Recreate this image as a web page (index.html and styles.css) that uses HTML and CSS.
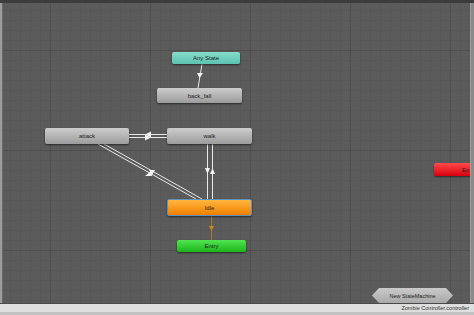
FILE: index.html
```html
<!DOCTYPE html>
<html lang="en">
<head>
    <meta charset="UTF-8">
    <title>Animator</title>
    <link rel="stylesheet" href="styles.css">
</head>
<body>
    <div class="window">
        <div class="topbar"></div>
        <div class="middle">
            <div class="edge-left"></div>
            <div class="canvas">
                <!-- transitions -->
                <svg class="links" viewBox="3 3 467 300" width="467" height="300">
                    <g stroke="#e8e8e8" stroke-width="1" fill="none">
                        <line x1="202" y1="64" x2="198" y2="88"/>
                        <line x1="129" y1="134.5" x2="167" y2="134.5"/>
                        <line x1="129" y1="137.5" x2="167" y2="137.5"/>
                        <line x1="207.5" y1="144" x2="207.5" y2="199"/>
                        <line x1="212.5" y1="144" x2="212.5" y2="199"/>
                        <line x1="98" y1="144" x2="196" y2="199"/>
                        <line x1="104" y1="144" x2="202" y2="199"/>
                    </g>
                    <line x1="211.5" y1="216" x2="211.5" y2="240" stroke="#b07a20" stroke-width="1"/>
                    <g fill="#f2f2f2">
                        <polygon points="197,73 203,73 199.5,78"/>
                        <polygon points="145,134.5 151,131.5 151,137.5"/>
                        <polygon points="151,137.5 145,134.5 145,140.5"/>
                        <polygon points="205,168 210,168 207.5,174"/>
                        <polygon points="210,174 215,174 212.5,168"/>
                        <polygon points="145,176 151,171 152,176"/>
                        <polygon points="155,170 149,170 152,175"/>
                    </g>
                    <polygon points="209,226 214,226 211.5,231" fill="#c88a20"/>
                </svg>

                <div class="node teal" style="left:169px; top:49px; width:68px; height:12px;">Any State</div>
                <div class="node gray" style="left:154px; top:85px; width:85px; height:15px;">back_fall</div>
                <div class="node gray" style="left:42px; top:125px; width:84px; height:16px;">attack</div>
                <div class="node gray" style="left:164px; top:125px; width:85px; height:16px;">walk</div>
                <div class="node orange" style="left:164px; top:196px; width:85px; height:17px;">Idle</div>
                <div class="node green" style="left:174px; top:237px; width:69px; height:12px;">Entry</div>
                <div class="node red" style="left:431px; top:160px; width:50px; height:13px;"><span class="red-label">Ex</span></div>

                <div class="machine">New StateMachine</div>
            </div>
            <div class="edge-right"></div>
        </div>
        <div class="statusbar">Zombie Controller.controller</div>
        <div class="footer"></div>
    </div>
</body>
</html>
```

FILE: styles.css
```css
body {
    margin: 0;
    overflow: hidden;
    font-family: "Liberation Sans", Arial, sans-serif;
    background: #c4c4c4;
}
.window {
    width: 474px;
    height: 315px;
    display: flex;
    flex-direction: column;
}
.topbar {
    height: 3px;
    background: #3c3c3c;
}
.middle {
    display: flex;
    height: 300px;
}
.edge-left {
    width: 3px;
    background: #9c9c9c;
    border-right: 1px solid #6a6a6a;
    box-sizing: border-box;
}
.edge-right {
    width: 4px;
    background: #8a8a8a;
    border-left: 1px solid #9e9e9e;
    box-sizing: border-box;
}
.canvas {
    position: relative;
    width: 467px;
    overflow: hidden;
    background-color: #5b5b5b;
    background-image:
        linear-gradient(90deg, rgba(0,0,0,0.09) 1px, transparent 1px),
        linear-gradient(rgba(0,0,0,0.09) 1px, transparent 1px),
        linear-gradient(90deg, rgba(0,0,0,0.04) 1px, transparent 1px),
        linear-gradient(rgba(0,0,0,0.04) 1px, transparent 1px);
    background-size: 100px 100px, 100px 100px, 10px 10px, 10px 10px;
    background-position: 47px 47px, 47px 47px, 7px 7px, 7px 7px;
}
.links {
    position: absolute;
    left: 0;
    top: 0;
}
.node {
    position: absolute;
    box-sizing: border-box;
    border-radius: 2px;
    display: flex;
    align-items: center;
    justify-content: center;
    font-size: 6px;
    color: #1e1e1e;
    box-shadow: 0 1px 2px rgba(0,0,0,0.55);
}
.gray {
    background: linear-gradient(#cdcdcd, #9c9c9c);
}
.teal {
    background: linear-gradient(#86dccb, #5cc2b0);
}
.orange {
    background: linear-gradient(#ffb640, #f07f00);
    border: 1px solid #5e93bd;
}
.green {
    background: linear-gradient(#52e552, #1bb51b);
}
.red {
    background: linear-gradient(#ff4a4a, #d8000e);
    justify-content: flex-start;
}
.red-label {
    margin-left: 28px;
}
.machine {
    position: absolute;
    left: 369px;
    top: 285px;
    width: 81px;
    height: 15px;
    clip-path: polygon(7px 0, calc(100% - 7px) 0, 100% 50%, calc(100% - 7px) 100%, 7px 100%, 0 50%);
    background: linear-gradient(#cacaca, #a9a9a9);
    display: flex;
    align-items: center;
    justify-content: center;
    font-size: 5.5px;
    color: #222;
}
.statusbar {
    height: 8px;
    background: #dedede;
    border-top: 1px solid #4a4a4a;
    font-size: 5.5px;
    color: #333;
    text-align: right;
    line-height: 8px;
    padding-right: 5px;
}
.footer {
    flex: 1;
    background: #c2c2c2;
}
```
